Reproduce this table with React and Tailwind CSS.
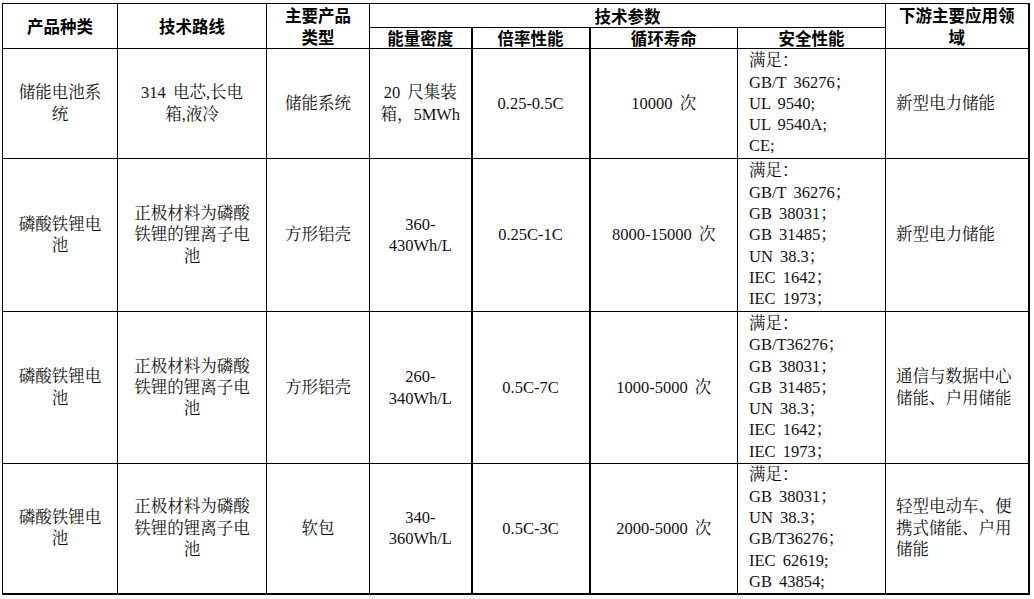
import React from "react";

const rows = [
  {
    h: "h-[110px]",
    c1: ["储能电池系", "统"],
    c2: ["314 电芯,长电", "箱,液冷"],
    c3: ["储能系统"],
    c4: ["20 尺集装", "箱，5MWh"],
    c5: "0.25-0.5C",
    c6: "10000 次",
    c7: ["满足：", "GB/T 36276；", "UL 9540;", "UL 9540A;", "CE;"],
    c8: ["新型电力储能"],
  },
  {
    h: "h-[153px]",
    c1: ["磷酸铁锂电", "池"],
    c2: ["正极材料为磷酸", "铁锂的锂离子电", "池"],
    c3: ["方形铝壳"],
    c4: ["360-", "430Wh/L"],
    c5: "0.25C-1C",
    c6: "8000-15000 次",
    c7: ["满足：", "GB/T 36276；", "GB 38031；", "GB 31485；", "UN 38.3；", "IEC 1642；", "IEC 1973；"],
    c8: ["新型电力储能"],
  },
  {
    h: "h-[152px]",
    c1: ["磷酸铁锂电", "池"],
    c2: ["正极材料为磷酸", "铁锂的锂离子电", "池"],
    c3: ["方形铝壳"],
    c4: ["260-", "340Wh/L"],
    c5: "0.5C-7C",
    c6: "1000-5000 次",
    c7: ["满足：", "GB/T36276；", "GB 38031；", "GB 31485；", "UN 38.3；", "IEC 1642；", "IEC 1973；"],
    c8: ["通信与数据中心", "储能、户用储能"],
  },
  {
    h: "h-[130px]",
    c1: ["磷酸铁锂电", "池"],
    c2: ["正极材料为磷酸", "铁锂的锂离子电", "池"],
    c3: ["软包"],
    c4: ["340-", "360Wh/L"],
    c5: "0.5C-3C",
    c6: "2000-5000 次",
    c7: ["满足：", "GB 38031；", "UN 38.3；", "GB/T36276；", "IEC 62619;", "GB 43854;"],
    c8: ["轻型电动车、便", "携式储能、户用", "储能"],
  },
];

function Lines({ items }) {
  return (
    <>
      {items.map((t, i) => (
        <div key={i} className="whitespace-nowrap">
          {t}
        </div>
      ))}
    </>
  );
}

export default function App() {
  const th =
    "border border-black p-0 align-middle text-center font-bold font-['Noto_Sans_CJK_SC',sans-serif] text-[16.5px] leading-[20px] text-black";
  const td =
    "border border-black p-0 align-middle text-center font-['Liberation_Serif','Noto_Serif_CJK_SC','Noto_Sans_CJK_SC',serif] text-[16.5px] leading-[21.3px] text-[#111] [word-spacing:3px]";
  return (
    <div className="w-[1034px] h-[599px] bg-white pt-[3px] pl-[2px]">
      <table className="border-collapse table-fixed w-[1026px] border-r-2 border-b-2 border-black">
        <colgroup>
          <col className="w-[115px]" />
          <col className="w-[149px]" />
          <col className="w-[103px]" />
          <col className="w-[102px]" />
          <col className="w-[118px]" />
          <col className="w-[148px]" />
          <col className="w-[148px]" />
          <col className="w-[143px]" />
        </colgroup>
        <thead>
          <tr className="h-[24px]">
            <th rowSpan={2} className={th}>
              产品种类
            </th>
            <th rowSpan={2} className={th}>
              技术路线
            </th>
            <th rowSpan={2} className={`${th} leading-[22px]`}>
              <Lines items={["主要产品", "类型"]} />
            </th>
            <th colSpan={4} className={th}>
              技术参数
            </th>
            <th rowSpan={2} className={`${th} border-r-2 leading-[22px]`}>
              <Lines items={["下游主要应用领", "域"]} />
            </th>
          </tr>
          <tr className="h-[21px]">
            <th className={th}>能量密度</th>
            <th className={`${th} border-l-2`}>倍率性能</th>
            <th className={`${th} border-l-2`}>循环寿命</th>
            <th className={th}>安全性能</th>
          </tr>
        </thead>
        <tbody>
          {rows.map((r, i) => (
            <tr key={i} className={r.h}>
              <td className={td}>
                <Lines items={r.c1} />
              </td>
              <td className={td}>
                <Lines items={r.c2} />
              </td>
              <td className={td}>
                <Lines items={r.c3} />
              </td>
              <td className={td}>
                <Lines items={r.c4} />
              </td>
              <td className={`${td} border-l-2`}>{r.c5}</td>
              <td className={`${td} border-l-2`}>{r.c6}</td>
              <td className={`${td} text-left pl-[11px]`}>
                <Lines items={r.c7} />
              </td>
              <td className={`${td} text-left pl-[10px] border-r-2`}>
                <Lines items={r.c8} />
              </td>
            </tr>
          ))}
        </tbody>
      </table>
    </div>
  );
}
